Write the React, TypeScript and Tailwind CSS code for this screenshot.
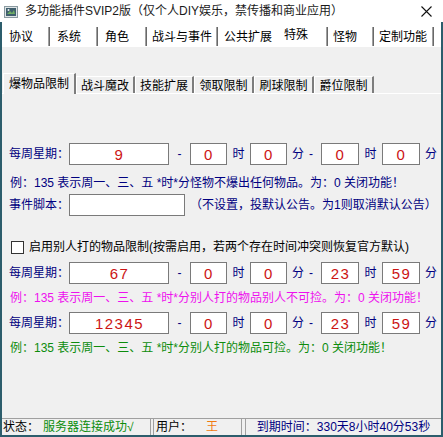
import React from "react";

const ui = "font-['Liberation_Sans','Noto_Sans_CJK_SC',sans-serif]";
const num = "font-['Liberation_Sans',sans-serif]";

function TopTab({ label, cls, sep = true, active = false }: { label: string; cls: string; sep?: boolean; active?: boolean }) {
  return (
    <div
      className={`h-[19px] shrink-0 flex items-center text-[12px] leading-none text-black ${cls} ${
        sep ? "border-r border-[#696969] shadow-[inset_-1px_0_0_#a0a0a0]" : ""
      }`}
    >
      <span className={active ? "-translate-y-[2px]" : ""}>{label}</span>
    </div>
  );
}

function SubTab({ label, cls, active = false }: { label: string; cls: string; active?: boolean }) {
  return (
    <div
      className={`shrink-0 flex justify-center border-l border-t border-white border-r-2 border-r-[#7d7d7d] text-[12px] leading-none text-black bg-[#f0f0f0] ${cls} ${
        active ? "h-[21px] pt-[4px] relative z-10" : "h-[17px] mt-[3px] pt-[3px]"
      }`}
    >
      {label}
    </div>
  );
}

function Box({ w, value }: { w: string; value?: string }) {
  return (
    <div
      className={`${w} h-[22px] shrink-0 border border-[#7a7a7a] bg-white flex items-center justify-center pl-[1px] text-[15px] leading-none tracking-[1.5px] text-[#cc1414] ${num}`}
    >
      {value}
    </div>
  );
}

function TimeRow({ v }: { v: string[] }) {
  return (
    <div className="flex items-center h-[22px] pl-[7px] text-[12px] leading-none text-[#000080]">
      <span className="w-[60px] shrink-0">每周星期：</span>
      <Box w="w-[100px]" value={v[0]} />
      <span className="w-[21px] shrink-0 text-center">-</span>
      <Box w="w-[37px]" value={v[1]} />
      <span className="w-[23px] shrink-0 text-center">时</span>
      <Box w="w-[37px]" value={v[2]} />
      <span className="w-[34px] shrink-0 flex pl-[5px]">
        <span>分</span>
        <span className="ml-[5px]">-</span>
      </span>
      <Box w="w-[38px]" value={v[3]} />
      <span className="w-[23px] shrink-0 text-center">时</span>
      <Box w="w-[38px]" value={v[4]} />
      <span className="pl-[5px]">分</span>
    </div>
  );
}

function Note({ color, children }: { color: string; children: React.ReactNode }) {
  return (
    <div className={`h-[16px] flex items-center pl-[8px] text-[12px] leading-none whitespace-nowrap ${color}`}>
      {children}
    </div>
  );
}

export default function App() {
  return (
    <div className={`w-[443px] h-[437px] flex flex-col bg-[#f0f0f0] overflow-hidden ${ui}`}>
      {/* caption */}
      <div className="h-[22px] shrink-0 bg-white flex items-center">
        <svg width="14" height="12" viewBox="0 0 14 12" className="ml-[4px] mt-[2px]">
          <rect x="0.5" y="0.5" width="13" height="11" fill="#dfe4e6" stroke="#8a9aa0" />
          <rect x="2" y="2" width="10" height="8" fill="#3f5f6d" />
          <path d="M3 8 L6 5 L8 7 L10 4 L11 8 Z" fill="#6fae64" />
          <circle cx="4.5" cy="4" r="1" fill="#e8eef0" />
        </svg>
        <span className="ml-[7px] text-[12px] leading-none text-[#1a1a1a] whitespace-nowrap">
          多功能插件SVIP2版（仅个人DIY娱乐，禁传播和商业应用）
        </span>
        <svg width="11" height="11" viewBox="0 0 11 11" className="ml-auto mr-[11px]">
          <path d="M0.5 0.5 L10.5 10.5 M10.5 0.5 L0.5 10.5" stroke="#111" strokeWidth="1.1" />
        </svg>
      </div>

      <div className="flex-1 flex flex-col border-l-2 border-r-2 border-b-2 border-[#2c5d6c] min-h-0">
        {/* main tabs */}
        <div className="h-[25px] shrink-0 bg-white flex pt-[5px]">
          <TopTab label="协议" cls="w-[48px] pl-[7px]" />
          <TopTab label="系统" cls="w-[48px] pl-[7px]" />
          <TopTab label="角色" cls="w-[49px] pl-[7px]" />
          <TopTab label="战斗与事件" cls="w-[71px] pl-[5px]" />
          <TopTab label="公共扩展" cls="w-[60px] pl-[6px]" sep={false} />
          <TopTab label="特殊" cls="w-[50px] pl-[6px]" active />
          <TopTab label="怪物" cls="w-[46px] pl-[5px]" />
          <TopTab label="定制功能" cls="w-[60px] pl-[5px]" />
        </div>

        <div className="h-[26px] shrink-0" />

        {/* sub tabs */}
        <div className="h-[20px] shrink-0 flex items-start pl-[1px]">
          <SubTab label="爆物品限制" cls="w-[73px]" active />
          <SubTab label="战斗魔改" cls="w-[59px]" />
          <SubTab label="技能扩展" cls="w-[59px]" />
          <SubTab label="领取限制" cls="w-[60px]" />
          <SubTab label="刷球限制" cls="w-[60px]" />
          <SubTab label="爵位限制" cls="w-[60px]" />
        </div>

        {/* page */}
        <div className="flex-1 flex flex-col border-t border-white min-h-0">
          <div className="mt-[49px]">
            <TimeRow v={["9", "0", "0", "0", "0"]} />
          </div>
          <div className="mt-[10px]">
            <Note color="text-[#000080]">例：135 表示周一、三、五 *时*分怪物不爆出任何物品。为：0 关闭功能！</Note>
          </div>
          <div className="mt-[3px] flex items-center h-[22px] pl-[7px] text-[12px] leading-none text-[#000080]">
            <span className="w-[60px] shrink-0">事件脚本：</span>
            <Box w="w-[116px]" />
            <span className="ml-[5px] whitespace-nowrap">（不设置，投默认公告。为1则取消默认公告）</span>
          </div>
          <div className="mt-[23px] h-[16px] flex items-center pl-[9px] text-[12px] leading-none text-black whitespace-nowrap">
            <span className="w-[13px] h-[13px] shrink-0 border border-[#333] bg-white" />
            <span className="ml-[5px]">启用别人打的物品限制(按需启用，若两个存在时间冲突则恢复官方默认)</span>
          </div>
          <div className="mt-[7px]">
            <TimeRow v={["67", "0", "0", "23", "59"]} />
          </div>
          <div className="mt-[6px]">
            <Note color="text-[#ee10ee]">例：135 表示周一、三、五 *时*分别人打的物品别人不可捡。为：0 关闭功能！</Note>
          </div>
          <div className="mt-[6px]">
            <TimeRow v={["12345", "0", "0", "23", "59"]} />
          </div>
          <div className="mt-[6px]">
            <Note color="text-[#0c8c0c]">例：135 表示周一、三、五 *时*分别人打的物品可捡。为：0 关闭功能！</Note>
          </div>
        </div>

        {/* status bar */}
        <div className="h-[17px] shrink-0 flex text-[12px] leading-none border-t border-[#a0a0a0]">
          <div className="w-[149px] shrink-0 flex items-center pl-[1px] border-r border-[#a0a0a0] whitespace-nowrap">
            <span className="text-black">状态：</span>
            <span className="ml-[4px] text-[#0c8c0c]">服务器连接成功√</span>
          </div>
          <div className="w-[89px] shrink-0 ml-[2px] flex items-center pl-[2px] border-l border-r border-[#a0a0a0] whitespace-nowrap">
            <span className="text-black">用户：</span>
            <span className="ml-[14px] text-[#f07a10]">王</span>
          </div>
          <div className="flex-1 ml-[3px] flex items-center justify-center border-l border-[#a0a0a0] text-[#000080] whitespace-nowrap">
            到期时间：330天8小时40分53秒
          </div>
        </div>
      </div>
    </div>
  );
}
